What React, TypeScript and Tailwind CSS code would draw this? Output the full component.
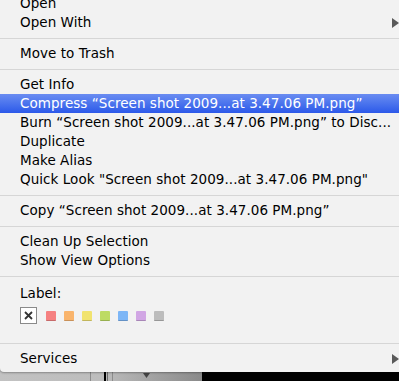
import React from 'react'

const fileName = '“Screen shot 2009...at 3.47.06 PM.png”'
const quoteName = '"Screen shot 2009...at 3.47.06 PM.png"'

const labelColors = [
  { fill: '#f58080', edge: '#c76a6a' },
  { fill: '#f9b46c', edge: '#c99159' },
  { fill: '#f1e36f', edge: '#c2b65c' },
  { fill: '#bddb63', edge: '#97b050' },
  { fill: '#7db6f6', edge: '#6491c5' },
  { fill: '#d1a6e4', edge: '#a886b7' },
  { fill: '#bdbdbd', edge: '#979797' },
]

function Arrow() {
  return (
    <svg width="8" height="10" viewBox="0 0 8 10" className="absolute right-0 top-1/2 -translate-y-1/2">
      <path d="M1 0 L8 5 L1 10 Z" fill="#5a5a5a" />
    </svg>
  )
}

function Item({ label, active, submenu }: { label: string; active?: boolean; submenu?: boolean }) {
  return (
    <div
      className={`relative h-[19px] flex items-center pl-[20px] whitespace-nowrap ${
        active ? 'bg-gradient-to-b from-[#6a8cf1] to-[#2c58e9] text-white' : 'text-black'
      }`}
    >
      {label}
      {submenu && <Arrow />}
    </div>
  )
}

function Separator() {
  return (
    <div className="h-[12px] flex items-center">
      <div className="w-full h-px bg-[#d6d6d6]" />
    </div>
  )
}

export default function App() {
  return (
    <div className="w-[399px] h-[381px] overflow-hidden bg-[#bdbdbd] relative" style={{ fontFamily: '"DejaVu Sans", "Liberation Sans", sans-serif' }}>
      <div className="bg-[#f2f2f2] rounded-bl-[4px] -mt-[6px] text-[13.5px] tracking-[0.05px] shadow-[0_1px_2px_rgba(0,0,0,0.3)] relative z-10">
        <Item label="Open" />
        <Item label="Open With" submenu />
        <Separator />
        <Item label="Move to Trash" />
        <Separator />
        <Item label="Get Info" />
        <Item label={`Compress ${fileName}`} active />
        <Item label={`Burn ${fileName} to Disc...`} />
        <Item label="Duplicate" />
        <Item label="Make Alias" />
        <Item label={`Quick Look ${quoteName}`} />
        <Separator />
        <Item label={`Copy ${fileName}`} />
        <Separator />
        <Item label="Clean Up Selection" />
        <Item label="Show View Options" />
        <Separator />
        <div className="pl-[20px] pt-[2px] h-[55px]">
          <div className="h-[19px] flex items-center">Label:</div>
          <div className="flex items-center mt-[4px]">
            <div className="w-[17px] h-[17px] border border-[#8a8a8a] bg-white flex items-center justify-center">
              <svg width="9" height="9" viewBox="0 0 9 9">
                <path d="M1 1 L8 8 M8 1 L1 8" stroke="#333" strokeWidth="1.8" />
              </svg>
            </div>
            <div className="flex gap-[8px] ml-[9px]">
              {labelColors.map((c, i) => (
                <div
                  key={i}
                  className="w-[10px] h-[10px] rounded-[1px]"
                  style={{ background: c.fill, borderBottom: `1px solid ${c.edge}` }}
                />
              ))}
            </div>
          </div>
        </div>
        <Separator />
        <Item label="Services" submenu />
        <div className="h-[4px]" />
      </div>
      <div className="flex h-[20px]">
        <div className="w-[202px] bg-gradient-to-r from-[#c2c2c2] via-[#bdbdbd] to-[#8a8a8a] relative">
          <div className="absolute left-[90px] top-0 w-px h-full bg-[#8c8c8c]" />
          <div className="absolute left-[104px] top-0 w-[2px] h-full bg-black" />
          <div className="absolute left-[107px] top-0 w-px h-full bg-[#6c6c6c]" />
          <div className="absolute left-[112px] top-0 w-px h-full bg-[#8c8c8c]" />
          <svg width="7" height="5" viewBox="0 0 7 5" className="absolute left-[143px] top-[1px]">
            <path d="M0 0 L7 0 L3.5 5 Z" fill="#444" />
          </svg>
        </div>
        <div className="flex-1 bg-black" />
      </div>
    </div>
  )
}
